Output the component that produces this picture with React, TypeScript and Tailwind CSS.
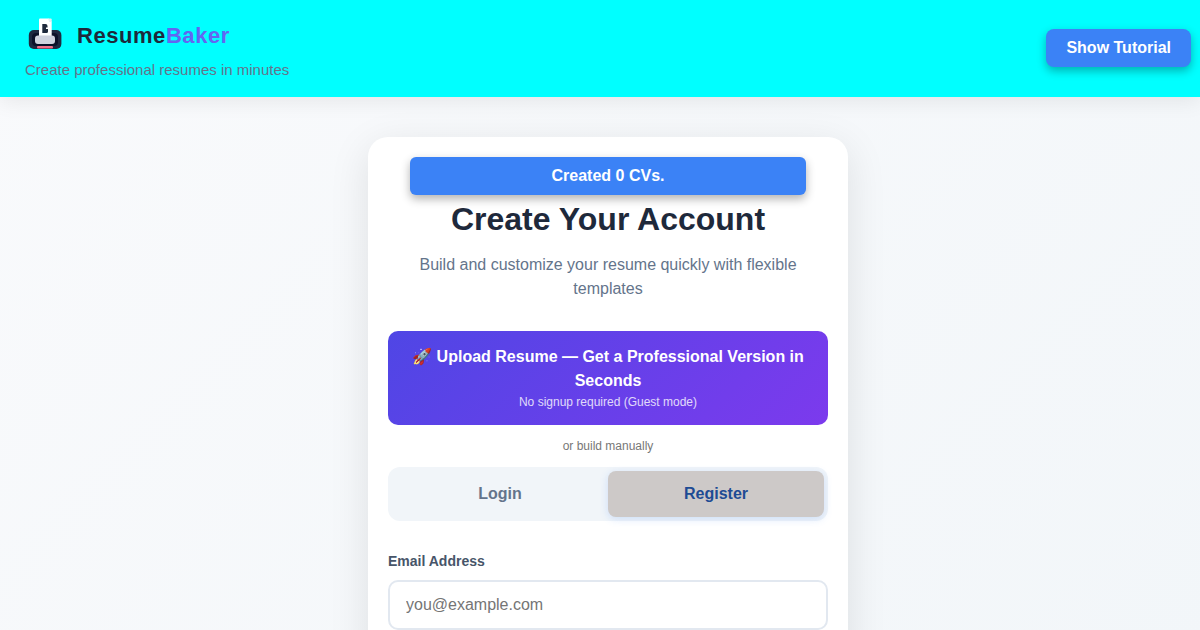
import { useState } from 'react'

type Tab = 'login' | 'register'

// Printer with a page coming out of the top
function Logo() {
    return (
        <svg width="40" height="40" viewBox="0 0 40 40" aria-hidden="true">
            <rect x="3.8" y="14" width="32.6" height="19" rx="5" fill="#1f2940" />
            <rect x="7" y="17" width="26" height="13" rx="4" fill="#0d1229" />
            <path d="M15 2.500h8.500l3.200 3.200V20H14V3.500a1 1 0 0 1 1-1z" fill="#ffffff" />
            <path d="M23 2.500h2.700a1 1 0 0 1 1 1V6h-2.500z" fill="#e3f0f4" />
            <rect x="10" y="19.500" width="20" height="8.500" rx="3" fill="#cfd3de" />
            <path d="M17.300 8h3.200a2 2 0 0 1 2 2v1.500h-1.500v1.500h2v2.500a1.500 1.500 0 0 1-1.500 1.500h-4.200z" fill="#1e293b" />
            <rect x="12" y="30" width="16" height="2.500" rx="1" fill="#f0708a" />
        </svg>
    )
}

function Header() {
    return (
        <header className="relative flex items-center justify-between bg-[#00ffff] pt-4 pr-[9px] pb-[17px] pl-[25px] shadow-[0_4px_20px_rgba(0,0,0,0.08)]">
            <div>
                <div className="flex items-center gap-3">
                    <Logo />
                    <span className="text-[22px] leading-10 font-bold tracking-wide text-[#1e293b]">
                        Resume<span className="text-[#6366f1]">Baker</span>
                    </span>
                </div>
                <p className="mt-1 text-[15px] leading-5 text-[#64748b]">Create professional resumes in minutes</p>
            </div>
            <button
                type="button"
                className="cursor-pointer rounded-lg bg-[#3b82f6] px-5 py-[7px] text-base leading-6 font-bold text-white shadow-[0_4px_10px_rgba(0,0,0,0.3)]"
            >
                Show Tutorial
            </button>
        </header>
    )
}

function AuthCard() {
    const [tab, setTab] = useState<Tab>('register')

    const tabClass = (name: Tab) =>
        tab === name
            ? 'flex-1 cursor-pointer rounded-lg bg-[#cdc9c8] py-[11px] leading-6 font-bold text-[#1e4b94] shadow-[0_2px_8px_rgba(59,130,246,0.2)]'
            : 'flex-1 cursor-pointer rounded-lg py-[11px] leading-6 font-bold text-[#64748b]'

    return (
        <section className="w-full max-w-[480px] rounded-[20px] bg-white px-5 pt-5 pb-10 shadow-[0_10px_40px_rgba(0,0,0,0.1)]">
            <div className="text-center">
                <button
                    type="button"
                    className="w-9/10 cursor-pointer rounded-md bg-[#3b82f6] px-5 py-[7px] text-base leading-6 font-bold text-white shadow-[0_4px_10px_rgba(0,0,0,0.3)]"
                >
                    Created 0 CVs.
                </button>
                <h1 className="text-[32px] leading-[48px] font-bold text-[#1e293b]">Create Your Account</h1>
                <p className="mt-[10px] text-base leading-6 text-[#64748b]">
                    Build and customize your resume quickly with flexible templates
                </p>
            </div>

            <button
                type="button"
                className="mt-[30px] w-full cursor-pointer rounded-[10px] bg-[linear-gradient(135deg,#4f46e5,#7c3aed)] px-5 py-[14px] text-base leading-6 font-bold text-white"
            >
                🚀 Upload Resume — Get a Professional Version in Seconds
                <span className="block text-xs leading-[18px] font-normal opacity-80">No signup required (Guest mode)</span>
            </button>

            <p className="my-3 text-center text-xs leading-[18px] text-[#777777]">or build manually</p>

            <div className="flex rounded-xl bg-[#f1f5f9] p-1">
                <button type="button" className={tabClass('login')} onClick={() => setTab('login')}>
                    Login
                </button>
                <button type="button" className={tabClass('register')} onClick={() => setTab('register')}>
                    Register
                </button>
            </div>

            <form className="mt-[30px]">
                <label htmlFor="email" className="block text-sm leading-[21px] font-bold text-[#475569]">
                    Email Address
                </label>
                <input
                    id="email"
                    type="email"
                    placeholder="you@example.com"
                    className="mt-2 h-[50px] w-full rounded-[10px] border-2 border-[#e2e8f0] px-4 text-base text-[#1e293b] placeholder:text-[#757575]"
                />
            </form>
        </section>
    )
}

export default function App() {
    return (
        <div className="min-h-screen bg-[linear-gradient(135deg,#f9fafc,#f2f6f9)] font-['Liberation_Sans',Arial,sans-serif]">
            <Header />
            <main className="flex justify-center pt-10 pl-4">
                <AuthCard />
            </main>
        </div>
    )
}
